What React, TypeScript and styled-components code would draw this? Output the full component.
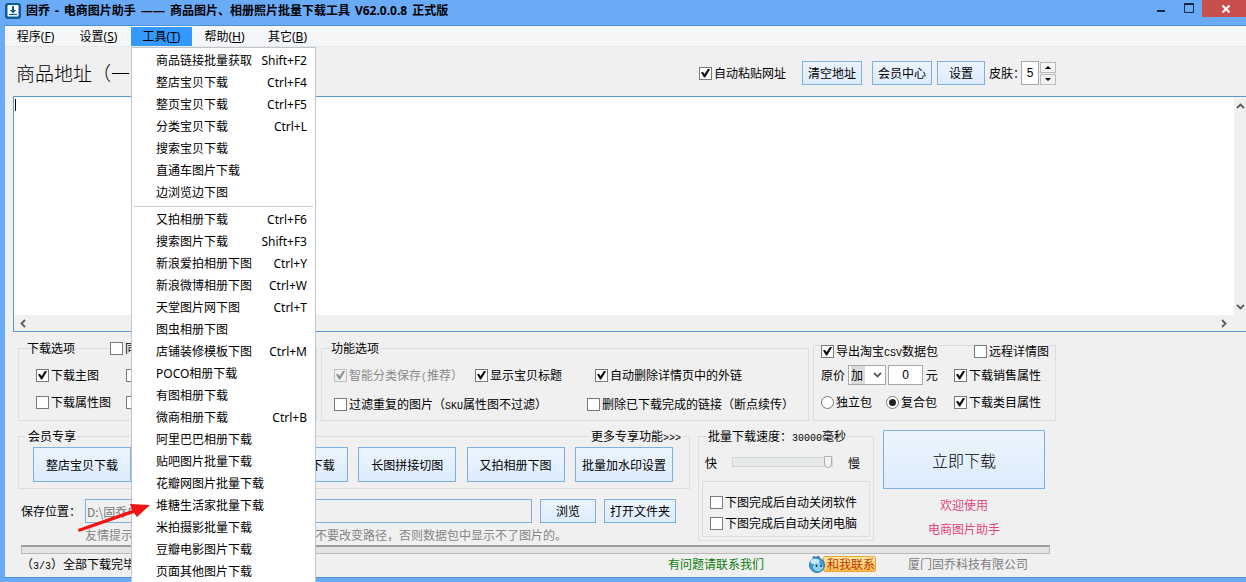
import React from "react";
import styled, { createGlobalStyle, css } from "styled-components";

const FACE = "#f0f0f0";
const BLUE = "#6aabf7";
const EDGE = "#5f97cf";

const GlobalStyle = createGlobalStyle`
  * { box-sizing: border-box; }
  html, body { margin: 0; padding: 0; }
  body, button, input, select, textarea {
    font-family: "Noto Sans CJK SC", "Liberation Sans", sans-serif;
    font-size: 12px;
    line-height: 16px;
    color: #000;
  }
  body { background: ${FACE}; }
`;

const Window = styled.div`
  position: relative;
  display: flex;
  flex-direction: column;
  min-height: 100vh;
  overflow: hidden;
  background: ${BLUE};
`;

const TitleBar = styled.header`
  display: flex;
  align-items: flex-start;
  justify-content: space-between;
  height: 25px;
  padding-left: 5px;
  font-family: "Noto Sans", "Noto Sans CJK SC", sans-serif;
`;

const TitleText = styled.h1`
  display: flex;
  align-items: center;
  gap: 5px;
  margin: 0;
  height: 22px;
  font-size: 12px;
  font-weight: 700;
  white-space: nowrap;
`;

const Controls = styled.div`
  display: flex;
`;

const WinButton = styled.button<{ $close?: boolean }>`
  display: flex;
  align-items: center;
  justify-content: center;
  width: ${(p) => (p.$close ? 44 : 27)}px;
  height: 17px;
  padding: ${(p) => (p.$close ? "0 0 0 4px" : "0")};
  border: 0;
  background: ${(p) => (p.$close ? "#c94f4f" : "transparent")};
`;

const Client = styled.div`
  display: flex;
  flex: 1;
  flex-direction: column;
  margin: 0 0 4px 5px;
  border-top: 1px solid #4d8fdd;
  border-bottom: 1px solid #4d8fdd;
  background: ${FACE};
`;

const MenuBar = styled.nav`
  display: flex;
  height: 21px;
  padding-top: 1px;
  gap: 2px;
  border-bottom: 1px solid #e6e8ea;
  background: #f5f6f7;
  font-family: "Noto Sans", "Noto Sans CJK SC", sans-serif;
`;

const MenuSlot = styled.div`
  position: relative;
  height: 20px;
`;

const MenuTitle = styled.button<{ $open?: boolean }>`
  width: 61px;
  height: 19px;
  padding: 0;
  border: 0;
  background: ${(p) => (p.$open ? "#3399ff" : "transparent")};
  font-family: inherit;
  line-height: 19px;
  white-space: nowrap;
`;

const DropMenu = styled.ul`
  position: absolute;
  z-index: 2;
  top: 100%;
  left: 0;
  width: 185px;
  margin: 0;
  padding: 2px 0 0;
  border: 1px solid #bfc5cb;
  border-bottom: 0;
  background: #fff;
  list-style: none;
`;

const DropItem = styled.li`
  display: flex;
  align-items: center;
  justify-content: space-between;
  height: 22px;
  padding: 0 8px 0 24px;
  white-space: nowrap;
`;

const DropRule = styled.li`
  height: 5px;
  padding: 2px 2px 0;
  &::before {
    content: "";
    display: block;
    border-top: 1px solid #c8c8c8;
  }
`;

const Toolbar = styled.div`
  display: flex;
  align-items: center;
  justify-content: space-between;
  max-width: 1051px;
  height: 49px;
  padding: 3px 0 0 11px;
`;

const Heading = styled.h2`
  margin: 0;
  font-size: 19px;
  font-weight: 300;
  line-height: 24px;
`;

const Cluster = styled.div<{ $gap?: number }>`
  display: flex;
  align-items: center;
  gap: ${(p) => p.$gap ?? 0}px;
  white-space: nowrap;
`;

const SkinLabel = styled.label`
  width: 32px;
  margin-left: 4px;
`;

const Button = styled.button<{ $w?: number; $h?: number; $big?: boolean }>`
  width: ${(p) => (p.$w ? `${p.$w}px` : "100%")};
  height: ${(p) => p.$h ?? 24}px;
  padding: 0;
  flex: none;
  border: 1px solid #7fb0e2;
  background: linear-gradient(#ecf4fd, #dcecfc);
  font-size: ${(p) => (p.$big ? 16 : 12)}px;
  font-weight: ${(p) => (p.$big ? 300 : 400)};
  white-space: nowrap;
`;

const NumberBox = styled.input<{ $w: number; $h: number }>`
  width: ${(p) => p.$w}px;
  height: ${(p) => p.$h}px;
  padding: 0;
  border: 1px solid #a5a7aa;
  background: #fff;
  font-family: "Liberation Sans", sans-serif;
  text-align: center;
`;

const Spinner = styled.div`
  display: grid;
  gap: 1px;
  margin-left: 1px;
`;

const SpinButton = styled.button`
  display: flex;
  align-items: center;
  justify-content: center;
  width: 16px;
  height: 11px;
  padding: 0;
  border: 1px solid #bcbcbc;
  background: #f2f2f2;
`;

const CheckLabel = styled.label<{ $off?: boolean }>`
  display: inline-flex;
  align-items: center;
  gap: 2px;
  height: 16px;
  background: ${FACE};
  color: ${(p) => (p.$off ? "#8a8a8a" : "#000")};
  white-space: nowrap;
`;

const mark = css`
  appearance: none;
  position: relative;
  flex: none;
  width: 13px;
  height: 13px;
  margin: 0;
  border: 1px solid #7a7a7a;
  background: #fff;
  &:checked::before {
    content: "";
    position: absolute;
    background: #111;
  }
`;

const Tick = styled.input.attrs({ type: "checkbox" })`
  ${mark}
  &:checked::before {
    inset: 1px;
    clip-path: polygon(0 45%, 20% 35%, 40% 62%, 80% 0, 100% 10%, 46% 100%, 34% 100%);
  }
  &:disabled {
    border-color: #c0c0c0;
    background: ${FACE};
  }
  &:disabled::before {
    background: #8f8f8f;
  }
`;

const Dot = styled.input.attrs({ type: "radio" })`
  ${mark}
  border-radius: 50%;
  &:checked::before {
    inset: 2px;
    border-radius: 50%;
    background: #222;
  }
`;

const Half = styled.span`
  font-family: "Liberation Mono", monospace;
  font-size: 10px;
  line-height: 1;
`;

const Editor = styled.div`
  position: relative;
  display: grid;
  flex: 1;
  grid-template: minmax(200px, 1fr) 16px / 1fr 12px;
  margin-left: 8px;
  border: 1px solid ${EDGE};
  border-right: 0;
  background: #fff;
`;

const AddressBox = styled.textarea`
  padding: 2px;
  border: 0;
  outline: 0;
  resize: none;
  background: #fff;
`;

const Caret = styled.span`
  position: absolute;
  top: 2px;
  left: 1px;
  width: 1px;
  height: 12px;
  background: #000;
`;

const ScrollTrack = styled.div<{ $flat?: boolean }>`
  display: flex;
  flex-direction: ${(p) => (p.$flat ? "row" : "column")};
  align-items: center;
  justify-content: space-between;
  grid-column: ${(p) => (p.$flat ? "1 / 3" : "2")};
  padding: ${(p) => (p.$flat ? "0 18px 0 5px" : "5px 0 4px")};
  background: #eff1f0;
`;

const Panels = styled.div`
  display: grid;
  grid-template-columns: 299fr 488fr 243fr;
  gap: 4px;
  max-width: 1051px;
  padding: 13px 0 0 13px;
`;

const Group = styled.fieldset<{ $top?: number; $bottom?: number }>`
  min-width: 0;
  margin: ${(p) => p.$top ?? 0}px 0 0;
  padding: 0 0 ${(p) => p.$bottom ?? 0}px;
  border: 1px solid #d9dee1;
`;

const Caption = styled.div`
  display: flex;
  justify-content: space-between;
  height: 16px;
  margin-top: -9px;
  padding: 0 7px 0 8px;
  white-space: nowrap;
  & > span, & > a { padding: 0 1px; background: ${FACE}; }
`;

const Fields = styled.div<{ $cols: string; $top: number; $left: number }>`
  display: grid;
  grid-template-columns: ${(p) => p.$cols};
  align-items: center;
  justify-items: start;
  margin-top: ${(p) => p.$top}px;
  padding-left: ${(p) => p.$left}px;
`;

const PlainLink = styled.a<{ $tone?: string }>`
  color: ${(p) => p.$tone ?? "#000"};
  text-decoration: none;
`;

const SelectShell = styled.span`
  position: relative;
  display: inline-flex;
  margin: 0 2px 0 3px;
  svg {
    position: absolute;
    top: 5px;
    right: 4px;
    pointer-events: none;
  }
`;

const Select = styled.select`
  appearance: none;
  width: 38px;
  height: 20px;
  padding: 0 2px;
  border: 1px solid #a5a7aa;
  border-radius: 0;
  background: linear-gradient(90deg, #fff 2px, #dcdcdc 2px, #dcdcdc 16px, #fff 16px);
`;

const LowerArea = styled.div`
  display: grid;
  grid-template-columns: 672fr 176fr 163fr;
  gap: 8px;
  align-items: start;
  max-width: 1040px;
  padding: 9px 0 0 13px;
`;

const MemberButtons = styled.div`
  display: flex;
  justify-content: space-between;
  padding: 3px 16px 0 14px;
`;

const SaveRow = styled.div`
  display: flex;
  align-items: center;
  gap: 8px;
  margin-top: 10px;
  padding: 0 14px 0 3px;
`;

const SaveLabel = styled.label`
  width: 56px;
  white-space: nowrap;
`;

const PathBox = styled.input`
  flex: 1;
  min-width: 0;
  height: 24px;
  padding: 0 1px;
  border: 1px solid #7fb0e2;
  background: ${FACE};
  color: #777;
`;

const Tip = styled.p`
  display: grid;
  grid-template-columns: 230px auto;
  margin: 4px 0 0;
  padding-left: 67px;
  color: #858585;
  white-space: nowrap;
`;

const SpeedRow = styled.div`
  display: flex;
  align-items: flex-start;
  justify-content: space-between;
  margin-top: 11px;
  padding: 0 13px 0 6px;
`;

const Slider = styled.input.attrs({ type: "range" })`
  appearance: none;
  width: 101px;
  height: 13px;
  margin: 0;
  background: transparent;
  &::-webkit-slider-runnable-track {
    height: 10px;
    border: 1px solid #d3d6d6;
    background: #e6e9e9;
  }
  &::-webkit-slider-thumb {
    appearance: none;
    width: 8px;
    height: 12px;
    margin-top: -2px;
    border: 1px solid #b0b0b0;
    border-radius: 0 0 4px 4px;
    background: #f3f3f3;
  }
`;

const CloseOptions = styled.div`
  display: grid;
  justify-items: start;
  gap: 5px;
  margin: 10px 3px 0;
  padding: 12px 0 5px 7px;
  border: 1px solid #d9dee1;
`;

const Launch = styled.div`
  display: grid;
  gap: 8px;
  justify-items: center;
  margin-left: 1px;
  color: #e0457f;
`;

const Progress = styled.div`
  max-width: 1029px;
  height: 9px;
  margin: 2px 0 0 16px;
  border: 1px solid #b9b9b9;
  border-top: 2px solid #9c9c9c;
  background: #e4e4e4;
`;

const StatusBar = styled.footer`
  display: grid;
  grid-template-columns: 647px 140px 100px auto;
  align-items: center;
  height: 20px;
  margin-bottom: 3px;
  padding-left: 16px;
  white-space: nowrap;
`;

const Chat = styled.a`
  display: inline-flex;
  align-items: center;
  height: 18px;
  color: #b8340c;
  text-decoration: none;
  svg { position: relative; z-index: 1; margin-right: -3px; }
  span {
    height: 16px;
    padding: 0 0 0 3px;
    border: 1px solid #eda43c;
    border-radius: 2px;
    background: linear-gradient(#ffe9a0, #ffbe4a);
    line-height: 14px;
  }
`;

const Muted = styled.span`
  color: #7d7d7d;
`;

const Pointer = styled.svg`
  position: absolute;
  z-index: 3;
  left: 76px;
  bottom: 48px;
  pointer-events: none;
`;

type Entry = [string, string?];

const shopTools: Entry[] = [
  ["商品链接批量获取", "Shift+F2"],
  ["整店宝贝下载", "Ctrl+F4"],
  ["整页宝贝下载", "Ctrl+F5"],
  ["分类宝贝下载", "Ctrl+L"],
  ["搜索宝贝下载"],
  ["直通车图片下载"],
  ["边浏览边下图"],
];

const albumTools: Entry[] = [
  ["又拍相册下载", "Ctrl+F6"],
  ["搜索图片下载", "Shift+F3"],
  ["新浪爱拍相册下图", "Ctrl+Y"],
  ["新浪微博相册下图", "Ctrl+W"],
  ["天堂图片网下图", "Ctrl+T"],
  ["图虫相册下图"],
  ["店铺装修模板下图", "Ctrl+M"],
  ["POCO相册下载"],
  ["有图相册下载"],
  ["微商相册下载", "Ctrl+B"],
  ["阿里巴巴相册下载"],
  ["贴吧图片批量下载"],
  ["花瓣网图片批量下载"],
  ["堆糖生活家批量下载"],
  ["米拍摄影批量下载"],
  ["豆瓣电影图片下载"],
  ["页面其他图片下载"],
];

const menus: [string, string][] = [
  ["程序", "F"],
  ["设置", "S"],
  ["工具", "T"],
  ["帮助", "H"],
  ["其它", "B"],
];

const titleParts = [
  "固乔",
  "-",
  "电商图片助手",
  "——",
  "商品图片、相册照片批量下载工具",
  "V62.0.0.8",
  "正式版",
];

const Entries = ({ items }: { items: Entry[] }) => (
  <>
    {items.map(([name, keys]) => (
      <DropItem key={name} role="menuitem">
        <span>{name}</span>
        {keys && <span>{keys}</span>}
      </DropItem>
    ))}
  </>
);

const Check = ({
  children,
  on,
  off,
}: {
  children?: React.ReactNode;
  on?: boolean;
  off?: boolean;
}) => (
  <CheckLabel $off={off}>
    <Tick defaultChecked={on} disabled={off} />
    <span>{children}</span>
  </CheckLabel>
);

const Chevron = ({ turn = 0 }: { turn?: number }) => (
  <svg width="9" height="9" viewBox="0 0 9 9" aria-hidden="true">
    <path
      d="M1 3 L4.5 6.5 L8 3"
      transform={`rotate(${turn} 4.5 4.5)`}
      fill="none"
      stroke="#5c5c5c"
      strokeWidth="1.8"
    />
  </svg>
);

const AppIcon = () => (
  <svg width="16" height="16" viewBox="0 0 16 16" aria-hidden="true">
    <rect width="16" height="16" rx="3" fill="#0d5c96" />
    <rect x="2.5" y="2" width="11" height="11.5" rx="1" fill="#fff" />
    <path d="M7 3h2v4h2.2L8 10.4 4.8 7H7z" fill="#0d5c96" />
    <path d="M4 11.5h8" stroke="#0d5c96" strokeWidth="1.2" />
  </svg>
);

const ChatIcon = () => (
  <svg width="18" height="18" viewBox="0 0 18 18" aria-hidden="true">
    <path d="M4 2.5 Q6 0 8 2 Q10 0 12 1.5 L10 4 H6z" fill="#6d8fa8" />
    <circle cx="9" cy="10" r="7.6" fill="#3a9bd8" stroke="#2b6fa3" strokeWidth=".8" />
    <ellipse cx="7" cy="6.5" rx="4.5" ry="2.8" fill="#c5e9fb" />
    <ellipse cx="10" cy="12" rx="5" ry="4" fill="#8fd3f4" />
    <path d="M8.5 9.5v2.5M13 9.5v2.5" stroke="#12344f" strokeWidth="1.4" />
  </svg>
);

export default function App() {
  return (
    <Window>
      <GlobalStyle />
      <TitleBar>
        <TitleText>
          <AppIcon />
          {titleParts.map((part) => (
            <span key={part}>{part}</span>
          ))}
        </TitleText>
        <Controls>
          <WinButton aria-label="最小化">
            <svg width="10" height="12">
              <path d="M0 8h8" stroke="#16283c" strokeWidth="2" />
            </svg>
          </WinButton>
          <WinButton aria-label="最大化">
            <svg width="12" height="12">
              <path d="M1.5 2v7.5h9V2" fill="none" stroke="#16283c" />
              <path d="M1 1h10" stroke="#16283c" strokeWidth="2" />
            </svg>
          </WinButton>
          <WinButton $close aria-label="关闭">
            <svg width="10" height="10">
              <path d="M1.5 1.5l7 7M8.5 1.5l-7 7" stroke="#fff" strokeWidth="2" />
            </svg>
          </WinButton>
        </Controls>
      </TitleBar>

      <Client>
        <MenuBar>
          {menus.map(([name, key]) => (
            <MenuSlot key={name}>
              <MenuTitle $open={key === "T"}>
                {name}(<u>{key}</u>)
              </MenuTitle>
              {key === "T" && (
                <DropMenu role="menu">
                  <Entries items={shopTools} />
                  <DropRule role="separator" />
                  <Entries items={albumTools} />
                </DropMenu>
              )}
            </MenuSlot>
          ))}
        </MenuBar>

        <Toolbar>
          <Heading>商品地址（一</Heading>
          <Cluster>
            <Cluster $gap={16}>
              <Check on>自动粘贴网址</Check>
              <Cluster $gap={5}>
                <Cluster $gap={10}>
                  <Button $w={60}>清空地址</Button>
                  <Button $w={60}>会员中心</Button>
                </Cluster>
                <Button $w={48}>设置</Button>
              </Cluster>
            </Cluster>
            <SkinLabel htmlFor="skin">皮肤：</SkinLabel>
            <NumberBox id="skin" $w={18} $h={24} defaultValue="5" />
            <Spinner>
              <SpinButton aria-label="增加">
                <svg width="6" height="3"><path d="M0 3h6L3 0z" /></svg>
              </SpinButton>
              <SpinButton aria-label="减少">
                <svg width="6" height="3"><path d="M0 0h6L3 3z" /></svg>
              </SpinButton>
            </Spinner>
          </Cluster>
        </Toolbar>

        <Editor>
          <AddressBox aria-label="商品地址" />
          <Caret />
          <ScrollTrack>
            <Chevron turn={180} />
            <Chevron />
          </ScrollTrack>
          <ScrollTrack $flat>
            <Chevron turn={90} />
            <Chevron turn={-90} />
          </ScrollTrack>
        </Editor>

        <Panels>
          <Group $top={3} $bottom={10} aria-label="下载选项">
            <Caption>
              <Cluster $gap={35}>
                <span>下载选项</span>
                <Check>同</Check>
              </Cluster>
            </Caption>
            <Fields $cols="90px auto" $top={11} $left={17}>
              <Check on>下载主图</Check>
              <Check />
            </Fields>
            <Fields $cols="90px auto" $top={11} $left={17}>
              <Check>下载属性图</Check>
              <Check />
            </Fields>
          </Group>

          <Group $top={3} aria-label="功能选项">
            <Caption>
              <span>功能选项</span>
            </Caption>
            <Fields $cols="141px 120px auto" $top={11} $left={12}>
              <Check on off>智能分类保存<Half>(</Half>推荐）</Check>
              <Check on>显示宝贝标题</Check>
              <Check on>自动删除详情页中的外链</Check>
            </Fields>
            <Fields $cols="253px auto" $top={13} $left={12}>
              <Check>过滤重复的图片（<Half>SKU</Half>属性图不过滤）</Check>
              <Check>删除已下载完成的链接（断点续传）</Check>
            </Fields>
          </Group>

          <Group $bottom={10} aria-label="数据包">
            <Fields $cols="153px auto" $top={-3} $left={7}>
              <Check on>导出淘宝<Half>CSV</Half>数据包</Check>
              <Check>远程详情图</Check>
            </Fields>
            <Fields $cols="133px auto" $top={6} $left={7}>
              <Cluster>
                原价
                <SelectShell>
                  <Select aria-label="原价">
                    <option>加</option>
                  </Select>
                  <Chevron />
                </SelectShell>
                <NumberBox $w={35} $h={20} defaultValue="0" aria-label="金额" />
                <Cluster>&nbsp;元</Cluster>
              </Cluster>
              <Check on>下载销售属性</Check>
            </Fields>
            <Fields $cols="65px 68px auto" $top={9} $left={7}>
              <CheckLabel><Dot name="pack" />独立包</CheckLabel>
              <CheckLabel><Dot name="pack" defaultChecked />复合包</CheckLabel>
              <Check on>下载类目属性</Check>
            </Fields>
          </Group>
        </Panels>

        <LowerArea>
          <div>
            <Group $top={6} $bottom={6} aria-label="会员专享">
              <Caption>
                <span>会员专享</span>
                <PlainLink href="#more">更多专享功能<Half>&gt;&gt;&gt;</Half></PlainLink>
              </Caption>
              <MemberButtons>
                <Button $w={98} $h={35}>整店宝贝下载</Button>
                <Button $w={98} $h={35} aria-label="分类宝贝下载" />
                <Button $w={98} $h={35}>整页宝贝下载</Button>
                <Button $w={98} $h={35}>长图拼接切图</Button>
                <Button $w={98} $h={35}>又拍相册下图</Button>
                <Button $w={98} $h={35}>批量加水印设置</Button>
              </MemberButtons>
            </Group>
            <SaveRow>
              <SaveLabel htmlFor="path">保存位置：</SaveLabel>
              <PathBox id="path" readOnly value="D:\固乔电" />
              <Button $w={56}>浏览</Button>
              <Button $w={72}>打开文件夹</Button>
            </SaveRow>
            <Tip>
              <span>友情提示</span>
              <span>不要改变路径，否则数据包中显示不了图片的。</span>
            </Tip>
          </div>

          <Group $top={6} $bottom={3} aria-label="批量下载速度">
            <Caption>
              <span>批量下载速度：<Half>30000</Half>毫秒</span>
            </Caption>
            <SpeedRow>
              <span>快</span>
              <Slider aria-label="速度" defaultValue={100} />
              <span>慢</span>
            </SpeedRow>
            <CloseOptions>
              <Check>下图完成后自动关闭软件</Check>
              <Check>下图完成后自动关闭电脑</Check>
            </CloseOptions>
          </Group>

          <Launch>
            <Button $h={59} $big>立即下载</Button>
            <span>欢迎使用</span>
            <span>电商图片助手</span>
          </Launch>
        </LowerArea>

        <Progress role="progressbar" aria-label="下载进度" />

        <StatusBar>
          <span>（<Half>3/3</Half>）全部下载完毕</span>
          <PlainLink href="#help" $tone="#0a7d0a">有问题请联系我们</PlainLink>
          <Chat href="#chat"><ChatIcon /><span>和我联系</span></Chat>
          <Muted>厦门固乔科技有限公司</Muted>
        </StatusBar>
      </Client>

      <Pointer width="76" height="32" viewBox="0 0 76 32" aria-hidden="true">
        <path d="M2 27 L56 8 L54 2 L74 3 L61 15 L58 11 L3 30z" fill="#f01414" />
      </Pointer>
    </Window>
  );
}
